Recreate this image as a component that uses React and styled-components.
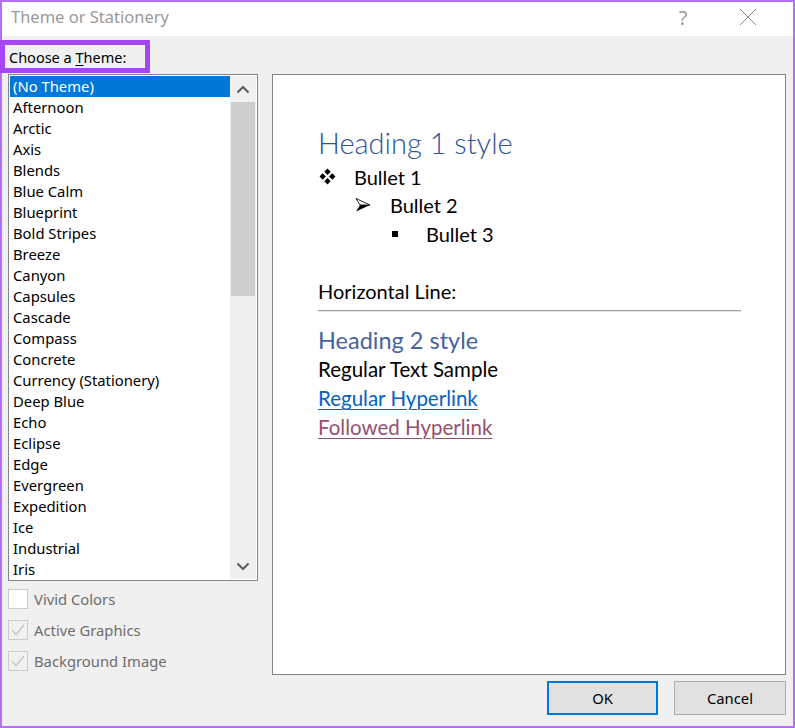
import React from 'react';
import styled, { createGlobalStyle } from 'styled-components';

const GlobalStyle = createGlobalStyle`
  html, body {
    margin: 0;
    padding: 0;
    background: #f0f0f0;
  }
  * { box-sizing: border-box; }
`;

const uiFont = `"Noto Sans", "Open Sans", sans-serif`;
const docFont = `Lato, "Noto Sans", sans-serif`;

const Window = styled.div`
  position: relative;
  width: 795px;
  height: 728px;
  border: 2px solid #b56ef6;
  background: #f0f0f0;
  display: flex;
  flex-direction: column;
  font-family: ${uiFont};
`;

const TitleBar = styled.div`
  height: 34px;
  background: #fff;
  display: flex;
  align-items: center;
  padding-left: 9px;
  color: #9a9a9a;
  font-size: 16.5px;
`;

const TitleText = styled.div`
  flex: 1;
  margin-top: -6px;
`;

const TitleButton = styled.div`
  width: ${p => p.w}px;
  display: flex;
  justify-content: center;
  align-items: center;
  margin-top: -4px;
  color: #9a9a9a;
  font-size: 20px;
`;

const Highlight = styled.div`
  position: absolute;
  left: -2px;
  top: 38px;
  width: 150px;
  height: 33px;
  border: 5px solid #a546f5;
  padding-left: 4px;
  display: flex;
  align-items: center;
  font-size: 14.5px;
  color: #000;
  u { text-underline-offset: 2px; }
`;

const Content = styled.div`
  flex: 1;
  display: flex;
  gap: 14px;
  padding: 38px 7px 0 6px;
`;

const LeftColumn = styled.div`
  width: 251px;
  display: flex;
  flex-direction: column;
`;

const ListBox = styled.div`
  height: 507px;
  border: 1px solid #828790;
  background: #fff;
  padding: 1px;
  display: flex;
`;

const Items = styled.div`
  flex: 1;
  overflow: hidden;
`;

const Item = styled.div`
  height: 21px;
  line-height: 20px;
  padding-left: 3px;
  font-size: 14.8px;
  color: ${p => (p.selected ? '#fff' : '#000')};
  background: ${p => (p.selected ? '#0078d7' : 'transparent')};
  white-space: nowrap;
`;

const ScrollBar = styled.div`
  width: 26px;
  background: #f0f0f0;
  display: flex;
  flex-direction: column;
`;

const ScrollArrow = styled.div`
  height: 26px;
  display: flex;
  align-items: center;
  justify-content: center;
`;

const Thumb = styled.div`
  height: 194px;
  margin: 0 1px;
  background: #cdcdcd;
`;

const Track = styled.div`
  flex: 1;
`;

const Options = styled.div`
  display: flex;
  flex-direction: column;
  gap: 11px;
  padding-top: 8px;
`;

const CheckRow = styled.div`
  display: flex;
  align-items: center;
  gap: 6px;
  height: 20px;
  color: #6d6d6d;
  font-size: 14.8px;
`;

const CheckBox = styled.div`
  width: 20px;
  height: 20px;
  border: 1px solid #cccccc;
  background: ${p => (p.checked ? '#f0f0f0' : '#fff')};
  display: flex;
  align-items: center;
  justify-content: center;
`;

const Preview = styled.div`
  flex: 1;
  height: 601px;
  border: 1px solid #7f848c;
  background: #fff;
  padding: 49px 44px 0 45px;
  font-family: ${docFont};
  color: #000;
`;

const Heading1 = styled.div`
  font-size: 29px;
  font-weight: 300;
  color: #2f5496;
  line-height: 38px;
`;

const Bullet = styled.div`
  display: flex;
  align-items: center;
  height: ${p => p.h}px;
  padding-left: ${p => p.indent}px;
  font-size: 20px;
`;

const BulletMark = styled.span`
  width: 35px;
  display: flex;
  align-items: center;
`;

const LineLabel = styled.div`
  font-size: 20px;
  margin-top: 30px;
  line-height: 26px;
`;

const Rule = styled.div`
  margin-top: 6px;
  width: 423px;
  border-top: 1px solid #a0a0a0;
  border-bottom: 1px solid #e3e3e3;
`;

const Heading2 = styled.div`
  font-size: 23.5px;
  font-weight: 400;
  color: #4663a0;
  margin-top: 13px;
  line-height: 30px;
`;

const DocText = styled.div`
  font-size: 20.5px;
  line-height: 29px;
  color: ${p => p.color || '#000'};
  text-decoration: ${p => (p.link ? 'underline' : 'none')};
  text-underline-offset: 3px;
  text-decoration-thickness: 1px;
`;

const Footer = styled.div`
  display: flex;
  justify-content: flex-end;
  gap: 16px;
  padding: 6px 7px 11px 0;
`;

const Button = styled.div`
  width: ${p => p.w}px;
  height: 34px;
  background: #e1e1e1;
  border: ${p => (p.primary ? '2px solid #0078d7' : '1px solid #adadad')};
  display: flex;
  align-items: center;
  justify-content: center;
  font-size: 14.8px;
  color: #000;
`;

const themes = [
  '(No Theme)', 'Afternoon', 'Arctic', 'Axis', 'Blends', 'Blue Calm', 'Blueprint',
  'Bold Stripes', 'Breeze', 'Canyon', 'Capsules', 'Cascade', 'Compass', 'Concrete',
  'Currency (Stationery)', 'Deep Blue', 'Echo', 'Eclipse', 'Edge', 'Evergreen',
  'Expedition', 'Ice', 'Industrial', 'Iris',
];

const Chevron = ({ down }) => (
  <svg width="14" height="9" viewBox="0 0 14 9">
    <path
      d={down ? 'M1.5 1.5 L7 7 L12.5 1.5' : 'M1.5 7.5 L7 2 L12.5 7.5'}
      fill="none"
      stroke="#606060"
      strokeWidth="2.2"
    />
  </svg>
);

const Check = () => (
  <svg width="16" height="14" viewBox="0 0 16 14">
    <path d="M2 7.5 L6 11.5 L14 2" fill="none" stroke="#c4c4c4" strokeWidth="1.4" />
  </svg>
);

function Option({ checked, label }) {
  return (
    <CheckRow>
      <CheckBox checked={checked}>{checked && <Check />}</CheckBox>
      <span>{label}</span>
    </CheckRow>
  );
}

export default function App() {
  return (
    <>
      <GlobalStyle />
      <Window>
        <TitleBar>
          <TitleText>Theme or Stationery</TitleText>
          <TitleButton w={40}>?</TitleButton>
          <TitleButton w={90}>
            <svg width="18" height="18" viewBox="0 0 18 18">
              <path d="M1 1 L17 17 M17 1 L1 17" stroke="#8a8a8a" strokeWidth="1" />
            </svg>
          </TitleButton>
        </TitleBar>

        <Highlight>
          <span>Choose a <u>T</u>heme:</span>
        </Highlight>

        <Content>
          <LeftColumn>
            <ListBox>
              <Items>
                {themes.map((t, i) => (
                  <Item key={t} selected={i === 0}>{t}</Item>
                ))}
              </Items>
              <ScrollBar>
                <ScrollArrow><Chevron /></ScrollArrow>
                <Thumb />
                <Track />
                <ScrollArrow><Chevron down /></ScrollArrow>
              </ScrollBar>
            </ListBox>
            <Options>
              <Option label="Vivid Colors" />
              <Option checked label="Active Graphics" />
              <Option checked label="Background Image" />
            </Options>
          </LeftColumn>

          <Preview>
            <Heading1>Heading 1 style</Heading1>
            <Bullet h={29} indent={1}>
              <BulletMark>
                <svg width="17" height="17" viewBox="0 0 16 16">
                  <path d="M8 0.5 L11 3.5 L8 6.5 L5 3.5 Z M8 9.5 L11 12.5 L8 15.5 L5 12.5 Z M3.5 5 L6.5 8 L3.5 11 L0.5 8 Z M12.5 5 L15.5 8 L12.5 11 L9.5 8 Z" fill="#000" />
                </svg>
              </BulletMark>
              Bullet 1
            </Bullet>
            <Bullet h={28} indent={37}>
              <BulletMark>
                <svg width="16" height="16" viewBox="0 0 16 16">
                  <path d="M1 1.5 L15 8 L1 14.5 L5 8 Z" fill="#000" />
                  <path d="M1 1.5 L15 8 L5 8 Z" fill="#fff" stroke="#000" strokeWidth="0.8" />
                </svg>
              </BulletMark>
              Bullet 2
            </Bullet>
            <Bullet h={29} indent={73}>
              <BulletMark>
                <svg width="8" height="8" viewBox="0 0 8 8">
                  <rect x="1" y="1" width="6" height="6" fill="#000" />
                </svg>
              </BulletMark>
              Bullet 3
            </Bullet>
            <LineLabel>Horizontal Line:</LineLabel>
            <Rule />
            <Heading2>Heading 2 style</Heading2>
            <DocText>Regular Text Sample</DocText>
            <DocText link color="#0563c1">Regular Hyperlink</DocText>
            <DocText link color="#954f72">Followed Hyperlink</DocText>
          </Preview>
        </Content>

        <Footer>
          <Button primary w={111}>OK</Button>
          <Button w={112}>Cancel</Button>
        </Footer>
      </Window>
    </>
  );
}
